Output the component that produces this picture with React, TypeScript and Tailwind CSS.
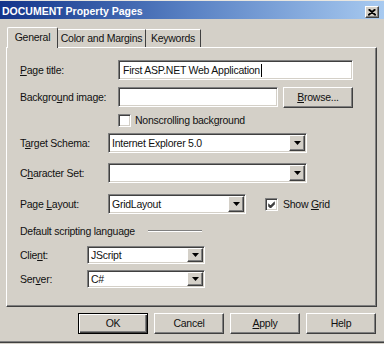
import React from "react";

const sunken =
  "border border-t-[#808080] border-l-[#808080] border-r-white border-b-white shadow-[inset_1px_1px_0_#404040,inset_-1px_-1px_0_#d4d0c8] bg-white";
const raised =
  "border border-t-white border-l-white border-r-[#404040] border-b-[#404040] shadow-[inset_-1px_-1px_0_#808080] bg-[#d4d0c8]";

const U = ({ children }: { children: React.ReactNode }) => <span className="underline underline-offset-[1px]">{children}</span>;

const DropArrow = () => (
  <div className={`${raised} w-[16px] h-full flex items-center justify-center shrink-0`}>
    <svg width="7" height="4" viewBox="0 0 7 4">
      <polygon points="0,0 7,0 3.5,4" fill="#000" />
    </svg>
  </div>
);

const Select = ({ value, width, height = 20 }: { value: string; width: string; height?: number }) => (
  <div className={`${sunken} ${width} flex items-stretch ${height === 18 ? "h-[18px]" : "h-[20px]"} p-[1px]`}>
    <div className="flex-1 flex items-center pl-[2px] truncate">{value}</div>
    <DropArrow />
  </div>
);

const Checkbox = ({ checked }: { checked?: boolean }) => (
  <div className={`${sunken} w-[13px] h-[13px] flex items-center justify-center shrink-0`}>
    {checked && (
      <svg width="7" height="7" viewBox="0 0 7 7">
        <path d="M0 2.5 L2.5 5 L7 0.5 M0 3.5 L2.5 6 L7 1.5 M0 4.5 L2.5 7 L7 2.5" stroke="#000" strokeWidth="1" fill="none" />
      </svg>
    )}
  </div>
);

const Button = ({ children, isDefault }: { children: React.ReactNode; isDefault?: boolean }) => (
  <div
    className={
      isDefault
        ? "w-[70px] h-[21px] border border-black bg-[#d4d0c8] shadow-[inset_1px_1px_0_#fff,inset_-1px_-1px_0_#404040,inset_-2px_-2px_0_#808080] flex items-center justify-center"
        : `${raised} w-[70px] h-[21px] flex items-center justify-center`
    }
  >
    {children}
  </div>
);

export default function App() {
  return (
    <div className="w-[384px] h-[344px] bg-[#d4d0c8] border-t border-t-[#e8e6e0] font-['Liberation_Sans',Arial,sans-serif] text-[10.5px] tracking-[-0.25px] text-[#111] leading-none overflow-hidden flex flex-col">
      {/* title bar */}
      <div className="h-[18px] shrink-0 bg-gradient-to-r from-[#14348a] via-[#5a82c4] to-[#a8caf0] flex items-end justify-between pl-[2px] pr-[5px]">
        <span className="font-bold text-white text-[10.5px] tracking-normal pb-[3px]">DOCUMENT Property Pages</span>
        <div className={`${raised} w-[14px] h-[12px] flex items-center justify-center mb-[1px]`}>
          <svg width="8" height="7" viewBox="0 0 8 7">
            <path d="M0.5 0.5 L7.5 6.5 M7.5 0.5 L0.5 6.5 M1.5 0.5 L8 6 M6.5 0.5 L0 6" stroke="#000" strokeWidth="1.2" fill="none" />
          </svg>
        </div>
      </div>

      {/* tabs */}
      <div className="mt-[8px] ml-[7px] h-[20px] shrink-0 flex items-end relative z-10">
        <div className="h-[21px] w-[51px] border-t border-l border-white border-r border-r-[#404040] bg-[#d4d0c8] flex items-center justify-center pb-[1px] -mb-[1px] rounded-t-[2px]">
          General
        </div>
        <div className="h-[18px] w-[88px] border-t border-t-white border-r border-r-[#404040] flex items-center justify-center">
          Color and Margins
        </div>
        <div className="h-[18px] w-[55px] border-t border-t-white border-r border-r-[#404040] flex items-center justify-center">
          Keywords
        </div>
      </div>

      {/* panel */}
      <div className="ml-[6px] w-[371px] h-[260px] shrink-0 border border-t-white border-l-white border-r-[#404040] border-b-[#404040] shadow-[inset_-1px_-1px_0_#808080] pl-[13px] flex flex-col">
        <div className="mt-[12px] h-[20px] flex items-center">
          <span className="w-[98px]"><U>P</U>age title:</span>
          <div className={`${sunken} w-[235px] h-[20px] flex items-center pl-[4px]`}>
            First ASP.NET Web Application<span className="inline-block w-[1px] h-[13px] bg-black ml-[1px]" />
          </div>
        </div>

        <div className="mt-[7px] h-[21px] flex items-center">
          <span className="w-[98px]">Backgro<U>u</U>nd image:</span>
          <div className={`${sunken} w-[160px] h-[20px] self-start`} />
          <div className="ml-[5px]">
            <Button>
              <U>B</U>rowse...
            </Button>
          </div>
        </div>

        <div className="mt-[6px] h-[13px] flex items-center pl-[98px]">
          <Checkbox />
          <span className="ml-[4px]">Nonscrolling back<U>g</U>round</span>
        </div>

        <div className="mt-[6px] h-[20px] flex items-center">
          <span className="w-[88px]">T<U>a</U>rget Schema:</span>
          <Select value="Internet Explorer 5.0" width="w-[199px]" />
        </div>

        <div className="mt-[10px] h-[20px] flex items-center">
          <span className="w-[88px]">C<U>h</U>aracter Set:</span>
          <Select value="" width="w-[199px]" />
        </div>

        <div className="mt-[11px] h-[20px] flex items-center">
          <span className="w-[88px]">Page <U>L</U>ayout:</span>
          <Select value="GridLayout" width="w-[138px]" />
          <div className="ml-[19px]">
            <Checkbox checked />
          </div>
          <span className="ml-[5px]">Show <U>G</U>rid</span>
        </div>

        <div className="mt-[11px] h-[12px] flex items-center">
          <span>Default scripting language</span>
          <div className="ml-[13px] w-[54px] h-[2px] border-t border-t-[#808080] border-b border-b-white" />
        </div>

        <div className="mt-[9px] h-[18px] flex items-center">
          <span className="w-[67px]">Clie<U>n</U>t:</span>
          <Select value="JScript" width="w-[118px]" height={18} />
        </div>

        <div className="mt-[6px] h-[18px] flex items-center">
          <span className="w-[67px]">Ser<U>v</U>er:</span>
          <Select value="C#" width="w-[118px]" height={18} />
        </div>
      </div>

      {/* buttons */}
      <div className="mt-[6px] shrink-0 flex justify-end gap-[6px] pr-[8px]">
        <Button isDefault>OK</Button>
        <Button>Cancel</Button>
        <Button>
          <U>A</U>pply
        </Button>
        <Button>Help</Button>
      </div>

      {/* window bottom edge */}
      <div className="mt-[7px] h-[1px] shrink-0 bg-[#808080]" />
      <div className="h-[1px] shrink-0 bg-[#404040]" />
    </div>
  );
}
